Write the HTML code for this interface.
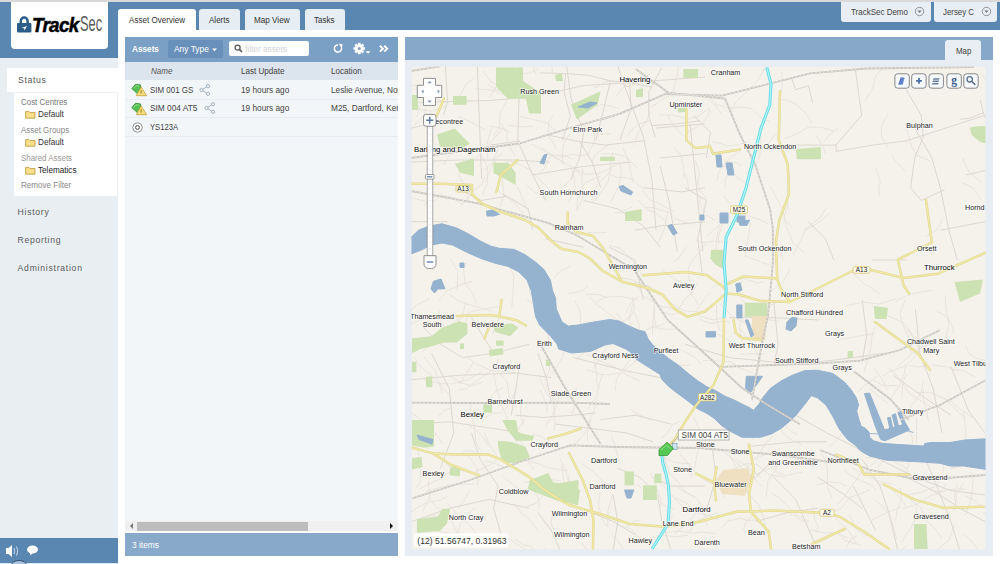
<!DOCTYPE html>
<html><head><meta charset="utf-8">
<style>
*{margin:0;padding:0;box-sizing:border-box}
html,body{width:1000px;height:564px;overflow:hidden;background:#fff;font-family:"Liberation Sans",sans-serif}
.a{position:absolute;white-space:nowrap}
.t{position:absolute;white-space:nowrap;line-height:1}
</style></head><body>
<!-- top strip -->
<div class="a" style="left:0;top:0;width:1000px;height:2px;background:#d9d9d9"></div>
<!-- header blue -->
<div class="a" style="left:0;top:2px;width:1000px;height:28px;background:#5a87b2"></div>
<div class="a" style="left:0;top:30px;width:118px;height:27.5px;background:#5a87b2"></div>
<!-- logo -->
<div class="a" style="left:10.5px;top:2px;width:97.5px;height:46.5px;background:#fff;border-radius:0 0 4px 4px"></div>
<svg class="a" style="left:16px;top:15px" width="17" height="19" viewBox="0 0 17 19">
 <path d="M4.8 9 V6 A3.4 3.4 0 0 1 11.6 6 V9" fill="none" stroke="#2c5d88" stroke-width="2.5"/>
 <rect x="1" y="8" width="14.4" height="9.6" rx="1" fill="#2c5d88"/>
 <path d="M5.5 13 L11 11 L8.5 15.5 L8.2 13.3Z" fill="#fff"/>
</svg>
<div class="t" style="left:32px;top:14px;font-size:21px;font-weight:bold;font-style:italic;color:#000;transform:scaleX(0.9);transform-origin:0 0;letter-spacing:-0.8px;-webkit-text-stroke:0.5px #000">Track</div>
<div class="t" style="left:79.5px;top:13.6px;font-size:21.5px;color:#5a5a5a;transform:scaleX(0.6);transform-origin:0 0">Sec</div>

<!-- right dropdowns -->
<div class="a" style="left:841px;top:2px;width:90px;height:20px;background:#e8eef4;border-radius:0 0 3px 3px"></div>
<div class="t" style="left:850.5px;top:7.99px;font-size:8.6px;color:#444;transform:scaleX(0.929);transform-origin:0 0">TrackSec Demo</div>
<svg class="a" style="left:914px;top:6px" width="11" height="11"><circle cx="5.5" cy="5.5" r="4.2" fill="none" stroke="#8a8a8a" stroke-width="0.9"/><path d="M3.4 4.4 L7.6 4.4 L5.5 6.9Z" fill="#7a7a7a"/></svg>
<div class="a" style="left:934px;top:2px;width:62.5px;height:20px;background:#e8eef4;border-radius:0 0 3px 3px"></div>
<div class="t" style="left:942.6px;top:7.99px;font-size:8.6px;color:#444;transform:scaleX(0.914);transform-origin:0 0">Jersey C</div>
<svg class="a" style="left:981px;top:6px" width="11" height="11"><circle cx="5.5" cy="5.5" r="4.2" fill="none" stroke="#8a8a8a" stroke-width="0.9"/><path d="M3.4 4.4 L7.6 4.4 L5.5 6.9Z" fill="#7a7a7a"/></svg>

<!-- left nav -->
<div class="a" style="left:0;top:57.5px;width:118px;height:480px;background:#e9eef3"></div>
<div class="a" style="left:7px;top:67.5px;width:111px;height:24.5px;background:#fff"></div>
<div class="t" style="left:18px;top:75.8px;font-size:8.7px;letter-spacing:0.65px;color:#555">Status</div>
<div class="a" style="left:14px;top:92px;width:103px;height:104px;background:#fff;border-top:1px solid #eef2f6"></div>
<div class="t" style="left:21.0px;top:98.42px;font-size:8.9px;color:#777;transform:scaleX(0.893);transform-origin:0 0">Cost Centres</div>
<div class="t" style="left:38.4px;top:110.42px;font-size:8.9px;color:#333;transform:scaleX(0.919);transform-origin:0 0">Default</div>
<div class="t" style="left:21.0px;top:126.42px;font-size:8.9px;color:#888;transform:scaleX(0.896);transform-origin:0 0">Asset Groups</div>
<div class="t" style="left:38.4px;top:138.42px;font-size:8.9px;color:#333;transform:scaleX(0.919);transform-origin:0 0">Default</div>
<div class="t" style="left:21.0px;top:154.42px;font-size:8.9px;color:#999;transform:scaleX(0.892);transform-origin:0 0">Shared Assets</div>
<div class="t" style="left:38.4px;top:166.42px;font-size:8.9px;color:#222;transform:scaleX(0.918);transform-origin:0 0">Telematics</div>
<div class="t" style="left:21.0px;top:180.92px;font-size:8.9px;color:#888;transform:scaleX(0.908);transform-origin:0 0">Remove Filter</div>
<svg class="a" style="left:25px;top:110px" width="11" height="9"><path d="M0.6 1.6 h3.4 l1 1 h5 v5.6 h-9.4z" fill="#f8e08a" stroke="#b8973a" stroke-width="0.8" stroke-linejoin="round"/></svg>
<svg class="a" style="left:25px;top:138px" width="11" height="9"><path d="M0.6 1.6 h3.4 l1 1 h5 v5.6 h-9.4z" fill="#f8e08a" stroke="#b8973a" stroke-width="0.8" stroke-linejoin="round"/></svg>
<svg class="a" style="left:25px;top:166px" width="11" height="9"><path d="M0.6 1.6 h3.4 l1 1 h5 v5.6 h-9.4z" fill="#f8e08a" stroke="#b8973a" stroke-width="0.8" stroke-linejoin="round"/></svg>
<div class="t" style="left:17.6px;top:208px;font-size:8.6px;letter-spacing:0.73px;color:#5a5a5a">History</div>
<div class="t" style="left:17.6px;top:236.4px;font-size:8.6px;letter-spacing:0.7px;color:#5a5a5a">Reporting</div>
<div class="t" style="left:17.6px;top:263.6px;font-size:8.6px;letter-spacing:0.76px;color:#5a5a5a">Administration</div>
<!-- left footer -->
<div class="a" style="left:0;top:537.5px;width:118px;height:25px;background:#5a87b2"></div>
<div class="a" style="left:0;top:562.5px;width:118px;height:1.5px;background:#dde6ee"></div>
<svg class="a" style="left:4px;top:544px" width="40" height="14">
 <path d="M2 4 h2.5 l3.5 -3 v12 l-3.5 -3 h-2.5z" fill="#fff"/>
 <path d="M10 4 q1.5 3 0 6 M12.5 2.5 q2.5 4.5 0 9" fill="none" stroke="#cfe0ee" stroke-width="0.9"/>
 <ellipse cx="28.5" cy="5.5" rx="5.5" ry="4" fill="#fff"/>
 <path d="M26 8.5 l0.5 3 l2.5 -3z" fill="#fff"/>
</svg>
<svg class="a" style="left:10px;top:560px" width="18" height="4"><ellipse cx="9" cy="5" rx="7.5" ry="4.5" fill="#a9c3da" stroke="#2e4e6e" stroke-width="1"/></svg>

<!-- tabs -->
<div class="a" style="left:118px;top:9px;width:77.5px;height:22px;background:#fff;border-radius:3px 3px 0 0"></div>
<div class="t" style="left:128.7px;top:16.17px;font-size:8.9px;color:#333;transform:scaleX(0.909);transform-origin:0 0">Asset Overview</div>
<div class="a" style="left:199px;top:9px;width:41px;height:21px;background:#e6edf3;border-radius:3px 3px 0 0"></div>
<div class="t" style="left:209.4px;top:16.22px;font-size:8.9px;color:#333;transform:scaleX(0.906);transform-origin:0 0">Alerts</div>
<div class="a" style="left:244.5px;top:9px;width:55.5px;height:21px;background:#e6edf3;border-radius:3px 3px 0 0"></div>
<div class="t" style="left:254.4px;top:16.22px;font-size:8.9px;color:#333;transform:scaleX(0.915);transform-origin:0 0">Map View</div>
<div class="a" style="left:304.5px;top:9px;width:40.5px;height:21px;background:#e6edf3;border-radius:3px 3px 0 0"></div>
<div class="t" style="left:314.4px;top:16.22px;font-size:8.9px;color:#333;transform:scaleX(0.906);transform-origin:0 0">Tasks</div>

<!-- asset list panel -->
<div class="a" style="left:125px;top:37px;width:273px;height:25px;background:#7ba0c5"></div>
<div class="t" style="left:132.0px;top:45.12px;font-size:8.9px;font-weight:bold;color:#fff;transform:scaleX(0.925);transform-origin:0 0">Assets</div>
<div class="a" style="left:168px;top:40px;width:54.5px;height:17.5px;background:#6890ba;border-radius:2px"></div>
<div class="t" style="left:174.0px;top:45.12px;font-size:8.9px;color:#fff;transform:scaleX(0.947);transform-origin:0 0">Any Type</div>
<svg class="a" style="left:212px;top:47.5px" width="6" height="4"><path d="M0 0.5 h5 l-2.5 2.8z" fill="#fff"/></svg>
<div class="a" style="left:228.5px;top:40.5px;width:80.5px;height:15.5px;background:#fff;border-radius:2px"></div>
<svg class="a" style="left:233.5px;top:44px" width="9" height="9"><circle cx="3.6" cy="3.6" r="2.5" fill="none" stroke="#555" stroke-width="1.3"/><path d="M5.4 5.4 L8 8" stroke="#555" stroke-width="1.6"/></svg>
<div class="t" style="left:244.5px;top:45.12px;font-size:8.9px;color:#d2d2d2;transform:scaleX(0.933);transform-origin:0 0">filter assets</div>
<svg class="a" style="left:332px;top:43px" width="12" height="12"><path d="M6 1.9 A3.6 3.6 0 1 0 9.45 4.5" fill="none" stroke="#fff" stroke-width="1.5"/><path d="M6.6 0.4 L10.6 1.3 L9.6 5.2z" fill="#fff"/></svg>
<svg class="a" style="left:353px;top:42px" width="19" height="13"><g transform="translate(6.3,6.5)" fill="#fff"><circle r="4.3"/><rect x="-1.3" y="-5.7" width="2.6" height="11.4" transform="rotate(0)"/><rect x="-1.3" y="-5.7" width="2.6" height="11.4" transform="rotate(45)"/><rect x="-1.3" y="-5.7" width="2.6" height="11.4" transform="rotate(90)"/><rect x="-1.3" y="-5.7" width="2.6" height="11.4" transform="rotate(135)"/><circle r="1.5" fill="#8d9cb3"/></g><path d="M12.6 9.3 h4.9 l-2.45 2.5z" fill="#fff"/></svg>
<svg class="a" style="left:379px;top:44.5px" width="10" height="8"><path d="M0.9 0.8 L3.9 3.7 L0.9 6.6 M5.2 0.8 L8.2 3.7 L5.2 6.6" fill="none" stroke="#fff" stroke-width="1.9"/></svg>

<div class="a" style="left:125px;top:62px;width:273px;height:18px;background:#dce5ee"></div>
<div class="t" style="left:151.0px;top:66.92px;font-size:8.9px;font-style:italic;color:#555;transform:scaleX(0.906);transform-origin:0 0">Name</div>
<div class="t" style="left:240.7px;top:66.92px;font-size:8.9px;color:#444;transform:scaleX(0.911);transform-origin:0 0">Last Update</div>
<div class="t" style="left:330.7px;top:66.92px;font-size:8.9px;color:#444;transform:scaleX(0.915);transform-origin:0 0">Location</div>

<div class="a" style="left:125px;top:80px;width:273px;height:440.5px;background:#f3f6f9;overflow:hidden">
 <div class="a" style="left:0;top:18.5px;width:273px;height:1px;background:#e6ecf2"></div>
 <div class="a" style="left:0;top:37px;width:273px;height:1px;background:#e6ecf2"></div>
 <div class="a" style="left:0;top:55.5px;width:273px;height:1px;background:#e6ecf2"></div>
 <div class="t" style="left:25.2px;top:5.85px;font-size:9.1px;color:#444;transform:scaleX(0.874);transform-origin:0 0">SIM 001 GS</div>
 <div class="t" style="left:115.7px;top:5.95px;font-size:9.1px;color:#444;transform:scaleX(0.909);transform-origin:0 0">19 hours ago</div>
 <div class="t" style="left:205.7px;top:5.95px;font-size:9.1px;color:#444;transform:scaleX(0.909);transform-origin:0 0">Leslie Avenue, North</div>
 <div class="t" style="left:25.2px;top:23.95px;font-size:9.1px;color:#444;transform:scaleX(0.913);transform-origin:0 0">SIM 004 AT5</div>
 <div class="t" style="left:115.7px;top:23.75px;font-size:9.1px;color:#444;transform:scaleX(0.909);transform-origin:0 0">19 hours ago</div>
 <div class="t" style="left:205.7px;top:23.85px;font-size:9.1px;color:#444;transform:scaleX(0.909);transform-origin:0 0">M25, Dartford, Kent</div>
 <div class="t" style="left:25.2px;top:42.75px;font-size:9.1px;color:#444;transform:scaleX(0.839);transform-origin:0 0">YS123A</div>
</div>
<!-- row icons -->
<svg class="a" style="left:130px;top:83px" width="18" height="15"><path d="M1.8 5.6 L5.5 1.3 L10.5 1.9 L11.1 6.9 L7.4 10.6z" fill="#56c152" stroke="#2f8a2d" stroke-width="0.8"/><path d="M3.5 5.5 L6 2.8 L9 3.2" fill="none" stroke="#a6e5a2" stroke-width="0.8"/><path d="M6.2 12.7 L11.1 4 L16.7 12.7z" fill="#f6de7a" stroke="#c4a23c" stroke-width="0.8" stroke-linejoin="round"/><rect x="10.6" y="7.3" width="1" height="3.2" fill="#9a7a1e"/></svg>
<svg class="a" style="left:130px;top:101.6px" width="18" height="15"><path d="M1.8 5.6 L5.5 1.3 L10.5 1.9 L11.1 6.9 L7.4 10.6z" fill="#56c152" stroke="#2f8a2d" stroke-width="0.8"/><path d="M3.5 5.5 L6 2.8 L9 3.2" fill="none" stroke="#a6e5a2" stroke-width="0.8"/><path d="M6.2 12.7 L11.1 4 L16.7 12.7z" fill="#f6de7a" stroke="#c4a23c" stroke-width="0.8" stroke-linejoin="round"/><rect x="10.6" y="7.3" width="1" height="3.2" fill="#9a7a1e"/></svg>
<svg class="a" style="left:132px;top:121.5px" width="12" height="12"><path d="M5.5 0.7 L9 2 L10.3 5.5 L9 9 L5.5 10.3 L2 9 L0.7 5.5 L2 2z" fill="#fff" stroke="#777" stroke-width="0.8"/><circle cx="5.5" cy="5.5" r="1.9" fill="none" stroke="#444" stroke-width="1"/></svg>
<svg class="a" style="left:199px;top:84px" width="12" height="12"><g fill="none" stroke="#9aa8b5" stroke-width="0.9"><circle cx="2.5" cy="6" r="1.6"/><circle cx="9" cy="2.2" r="1.6"/><circle cx="9" cy="9.8" r="1.6"/><path d="M4 5.2 L7.5 3 M4 6.8 L7.5 9"/></g></svg>
<svg class="a" style="left:203.5px;top:102px" width="12" height="12"><g fill="none" stroke="#9aa8b5" stroke-width="0.9"><circle cx="2.5" cy="6" r="1.6"/><circle cx="9" cy="2.2" r="1.6"/><circle cx="9" cy="9.8" r="1.6"/><path d="M4 5.2 L7.5 3 M4 6.8 L7.5 9"/></g></svg>

<!-- scrollbar -->
<div class="a" style="left:125px;top:520.5px;width:273px;height:10.5px;background:#f0f0f0"></div>
<svg class="a" style="left:129px;top:522px" width="5" height="8"><path d="M4 1 v6 l-3 -3z" fill="#777"/></svg>
<div class="a" style="left:137px;top:522px;width:171px;height:8.5px;background:#bdbdbd"></div>
<svg class="a" style="left:389px;top:522px" width="5" height="8"><path d="M1 1 v6 l3 -3z" fill="#111"/></svg>
<div class="a" style="left:125px;top:533px;width:273px;height:23px;background:#88a9c9"></div>
<div class="t" style="left:132.0px;top:541.02px;font-size:8.9px;color:#fff;transform:scaleX(0.941);transform-origin:0 0">3 items</div>

<!-- map panel -->
<div class="a" style="left:405px;top:37px;width:588px;height:23px;background:#87a8c9"></div>
<div class="a" style="left:945px;top:40px;width:36px;height:20px;background:#e8eef4;border-radius:3px 3px 0 0"></div>
<div class="t" style="left:955.5px;top:46.72px;font-size:8.9px;color:#444;transform:scaleX(0.890);transform-origin:0 0">Map</div>
<div class="a" style="left:405px;top:60px;width:588px;height:496px;background:#e7edf3"></div>
<svg class="a" style="left:0;top:0" width="1000" height="564" viewBox="0 0 1000 564"><defs><clipPath id="mc"><rect x="411.5" y="66.5" width="574" height="483"/></clipPath></defs><g clip-path="url(#mc)">
<rect x="411.5" y="66.5" width="574" height="483" fill="#f5f2ec"/>
<g fill="none" stroke="#d9d5cd" stroke-width="0.9" stroke-linejoin="round"><path d="M980.213,100 L983.404,112.766 L985.532,118.085"/><path d="M960,119.149 L968.511,118.617 L983.404,112.766"/><path d="M540,72.8 L565.6,73.6 L588,75.2 L610.4,80.8 L629.6,82.4 L652,87.2"/><path d="M565.6,73.6 L564,92 L570.4,116 L562.4,140"/><path d="M610.4,80.8 L604,108 L596,140"/><path d="M629.6,82.4 L631.2,108 L620,140"/><path d="M648.8,92 L648.8,116 L655.2,136.8"/><path d="M661.6,68 L648.8,92"/><path d="M652,125.6 L676,124 L700,120.8"/><path d="M445.426,66.383 L447.553,102.553 L443.298,115.319"/><path d="M477.34,66.383 L479.468,123.83 L481.596,179.149"/><path d="M411.383,102.553 L490.106,100.426 L515.638,98.2979 L545.426,94.0426 L583.723,85.5319 L617.766,83.4043 L705,77.0213"/><path d="M519.894,66.383 L517.766,140.851 L532.66,174.894 L545.426,200.426"/><path d="M566.702,66.383 L570.957,98.2979 L583.723,132.34 L579.468,157.872 L570.957,179.149"/><path d="M545.426,134.468 L575.213,140.851 L605,145.106 L643.298,140.851"/><path d="M490.106,145.106 L519.894,140.851"/><path d="M617.766,66.383 L630.532,102.553 L643.298,136.596 L651.809,179.149 L656.064,230.213"/><path d="M411.383,162.128 L456.064,160 L515.638,160 L549.681,162.128"/><path d="M532.66,174.894 L583.723,166.383 L630.532,162.128"/><path d="M656.064,128.085 L705,123.83"/><path d="M660.319,157.872 L705,153.617"/><path d="M579.468,140.851 L592.234,162.128 L600.745,187.66"/><path d="M502.872,194.043 L528.404,208.936 L532.66,230.213"/><path d="M583.723,200.426 L617.766,208.936 L643.298,225.957 L660.319,247.234"/><path d="M643.298,187.66 L681.596,191.915 L705,187.66"/><path d="M660.319,166.383 L668.83,200.426 L677.34,251.489"/><path d="M690.106,123.83 L694.362,166.383 L698.617,208.936 L702.872,251.489"/><path d="M411.383,221.702 L447.553,221.702"/><path d="M545.426,238.723 L583.723,247.234"/><path d="M634.787,230.213 L660.319,225.957 L705,221.702"/><path d="M609.255,247.234 L634.787,260 L643.298,300"/><path d="M411.383,128.085 L430.532,123.83"/><path d="M456.064,187.66 L481.596,200.426 L507.128,196.17"/><path d="M855.213,68.5106 L861.596,115.319 L836.064,145.106 L836.064,151.489"/><path d="M836.064,151.489 L872.234,145.106 L906.277,140.851 L985,115.319"/><path d="M906.277,89.7872 L921.17,115.319 L923.298,136.596 L914.787,157.872 L910.532,187.66 L921.17,200.426 L944.574,189.787"/><path d="M914.787,128.085 L931.809,157.872 L940.319,187.66 L948.83,230.213 L957.34,260"/><path d="M787.128,145.106 L836.064,145.106"/><path d="M685,187.66 L706.277,200.426 L697.766,238.723 L702.021,272.766"/><path d="M940.319,230.213 L985,221.702"/><path d="M872.234,260 L906.277,260"/><path d="M965.851,174.894 L985,170.638"/><path d="M693.511,115.319 L710.532,132.34 L706.277,157.872"/><path d="M791.383,77.0213 L795.638,89.7872 L808.404,85.5319 L812.66,102.553"/><path d="M808.404,221.702 L825.426,238.723 L833.936,260"/><path d="M431.587,353.175 L449.312,388.625 L453.744,432.937 L440.45,468.387"/><path d="M411.647,379.762 L458.175,375.331 L515.781,373.116 L551.231,377.547"/><path d="M462.606,357.606 L493.625,353.175 L529.075,344.312"/><path d="M411.647,424.075 L449.312,421.859 L493.625,428.506 L520.212,432.937"/><path d="M515.781,415.212 L542.369,417.428 L573.387,415.212 L595.544,412.997"/><path d="M471.469,432.937 L480.331,459.525 L498.056,486.112 L493.625,508.269 L502.487,539.287"/><path d="M520.212,362.037 L515.781,388.625 L511.35,415.212"/><path d="M555.662,424.075 L591.112,428.506 L626.562,432.937 L653.15,441.8"/><path d="M599.975,419.644 L635.425,415.212 L670.875,424.075"/><path d="M411.647,521.562 L449.312,508.269 L489.194,499.406 L529.075,508.269"/><path d="M537.937,512.7 L551.231,530.425 L560.094,549.922"/><path d="M591.112,512.7 L613.269,521.562 L635.425,534.856"/><path d="M617.7,468.387 L639.856,477.25 L653.15,490.544"/><path d="M653.15,477.25 L670.875,486.112 L704.996,486.112"/><path d="M471.469,317.725 L493.625,353.175"/><path d="M573.387,357.606 L626.562,370.9 L670.875,379.762 L704.996,393.056"/><path d="M422.725,326.587 L440.45,344.312 L462.606,357.606"/><path d="M537.937,353.175 L546.8,379.762 L551.231,401.919"/><path d="M613.269,494.975 L617.7,521.562 L613.269,549.922"/><path d="M657.581,494.975 L662.012,521.562 L670.875,549.922"/><path d="M685,344.312 L729.312,357.606 L773.625,362.037 L817.937,362.037 L853.387,357.606 L884.406,353.175"/><path d="M729.312,317.725 L773.625,317.725 L817.937,319.941"/><path d="M773.625,300 L778.056,344.312 L773.625,366.469"/><path d="M862.25,300 L866.681,335.45 L862.25,362.037"/><path d="M915.425,308.862 L919.856,353.175 L933.15,388.625 L942.012,432.937"/><path d="M950.875,366.469 L968.6,410.781 L984.996,432.937"/><path d="M893.269,375.331 L924.287,397.487 L950.875,415.212"/><path d="M795.781,415.212 L826.8,432.937 L853.387,446.231 L879.975,459.525 L915.425,477.25 L950.875,490.544 L984.996,494.975"/><path d="M751.469,446.231 L795.781,441.8 L826.8,441.8"/><path d="M862.25,459.525 L879.975,486.112 L888.837,512.7 L897.7,549.922"/><path d="M817.937,477.25 L844.525,494.975 L862.25,508.269"/><path d="M906.562,477.25 L933.15,490.544 L959.737,508.269 L984.996,521.562"/><path d="M919.856,446.231 L933.15,477.25 L950.875,521.562 L959.737,549.922"/><path d="M755.9,521.562 L786.919,512.7 L817.937,508.269"/><path d="M950.875,468.387 L984.996,459.525"/><path d="M773.625,477.25 L795.781,499.406 L809.075,530.425 L817.937,549.922"/><path d="M729.312,486.112 L755.9,477.25 L773.625,459.525"/><path d="M711.587,441.8 L716.019,477.25 L707.156,508.269"/><path d="M853.387,486.112 L875.544,530.425"/></g>
<g fill="none" stroke="#e2ded6" stroke-width="0.7" stroke-linejoin="round"><path d="M504.588,88.4765 L490.4,81.4 L482.9,70.8"/><path d="M473.048,78.8061 L467.2,82.8 L459.4,96.7"/><path d="M475.516,159.488 L483.9,149.5 L489.9,143.3 L494.7,137.4 L503.3,128.3"/><path d="M572.914,167.618 L584.9,174.1 L597.5,173.7 L603.7,171.2 L616.4,164.8"/><path d="M501.789,153.249 L494.8,158.9 L488.9,173.1 L485.3,182"/><path d="M510.264,132.876 L504.1,128.8 L489.2,126.2"/><path d="M552.31,71.8419 L551.5,59 L553.2,49.4 L556.6,36.7 L563.8,27.7"/><path d="M684.013,136.641 L673.8,126 L667,115"/><path d="M539.79,172.778 L544.4,168.5 L547.1,161 L551.3,155.7"/><path d="M448.379,102.895 L443.3,107.6 L431.2,111.2 L415.5,108.8"/><path d="M491.464,127.879 L486.9,144.8 L487.4,152.9 L488,161.6"/><path d="M581.257,105.149 L593.5,107.1 L602.9,104.3 L618.7,108.3"/><path d="M600.285,176.228 L585.9,182.3 L579.1,190.6 L576.8,204 L578,210.7"/><path d="M457.906,116.668 L469.8,121.3 L485,129.8"/><path d="M431.321,96.9849 L426.1,104.4 L424.5,114.6 L413.5,126.5 L405.8,135.1"/><path d="M435.821,81.226 L427.3,89.3 L421.9,100.2 L416.9,116.9"/><path d="M610.43,202.208 L618.7,186.5 L621.6,172.5 L619.5,162.3"/><path d="M634.09,145.356 L638.4,132.4 L647.4,119.9 L650,112"/><path d="M526.798,185.696 L534.7,192.2 L540.5,194.9 L547.7,200.4"/><path d="M687.433,132.637 L702.2,123.4 L707.7,116.7 L710.4,108.8"/><path d="M591.355,200.146 L597.6,184.4 L607.3,174.7 L611.8,168.8"/><path d="M616.621,95.6986 L626.3,83.6 L641,78.5 L650.7,73.8"/><path d="M684.624,173.995 L687.1,179.8 L689.4,191.2"/><path d="M587.745,154.785 L579.9,155.6 L573.9,154 L559.5,157.2"/><path d="M627.604,86.7484 L642.1,80.1 L649.1,74.4"/><path d="M480.516,153.379 L487.7,167.7 L487.6,182.5 L482.3,195.5"/><path d="M560.344,189.244 L569.5,180.9 L573.8,176.4"/><path d="M463.918,66.5859 L467.3,59.7 L466.7,52.2"/><path d="M608.194,145.078 L594.9,155 L591.8,162.7"/><path d="M439.248,133.374 L450,136.8 L461.5,140.7"/><path d="M611.199,133.4 L599.2,134.5 L587.7,130.2 L576.5,117.2"/><path d="M669.006,96.1857 L662.1,99.1 L656.9,103.6 L650.9,106.9"/><path d="M637.558,199.657 L647,209.6 L655.4,212.9 L664.5,220.1 L667.6,226.6"/><path d="M458.048,165.507 L459.7,176.6 L464.6,185.3 L467,194.9 L468.1,201"/><path d="M538.292,68.6942 L529.9,73.3 L522.6,73.3 L514.7,69.6 L507.8,68.3"/><path d="M672.805,93.0512 L676.8,77.3 L679.1,60.2 L681,47.9"/><path d="M553.943,114.73 L548.9,121.2 L548.2,130.4 L549.7,137.3 L556.6,148.7"/><path d="M487.426,84.13 L496.7,90.1 L510.1,90.4 L522.5,98 L539.6,102.5"/><path d="M463.351,204.905 L450.5,196.9 L438.7,194.9 L429.4,198.9 L424.4,206.5"/><path d="M622.86,148.106 L626.7,156.2 L630.3,169.6 L633.2,183.2"/><path d="M667.842,210.577 L664.8,228.1 L658.2,242.7"/><path d="M594.797,126.3 L594.3,142.3 L588,154.3"/><path d="M535.484,74.2548 L530.2,58.7 L524.6,51.1 L518.6,43.8"/><path d="M456.527,132.428 L454.1,149.9 L448.3,156.8 L443.4,165.2"/><path d="M411.309,122.862 L398.9,129 L390,141.5 L387,157 L386.2,170.1"/><path d="M497.598,159.821 L513.7,161.7 L528.7,169.1 L538.1,178.3 L548.7,188.5"/><path d="M493.127,158.187 L501.3,172.8 L503.2,187.5 L504,195.1 L500.5,206.6"/><path d="M643.552,189.135 L633.3,179.4 L624.7,177.6 L617.1,177.4 L610.5,174.4"/><path d="M572.414,159.537 L564.6,155.2 L553.1,155.2 L537.8,147.4 L531.6,144"/><path d="M626.515,136.605 L632.1,129.7 L638.7,124 L649.7,120.7"/><path d="M433.178,201.66 L427.9,214 L428,220.9"/><path d="M484.389,176.739 L482,184 L472.8,191.4 L469.1,197.6 L460.5,205.8"/><path d="M493.522,135.419 L498.8,128.9 L500.6,111.8 L506,101.6 L513.2,85.5"/><path d="M488.642,97.2657 L493.3,92.2 L499.8,78.7"/><path d="M514.911,155.901 L506.9,141.3 L506.7,132.5 L500.1,122.7"/><path d="M412.038,139.263 L398.5,145.1 L391.7,153.1 L387,161.9"/><path d="M508.761,125.341 L523.2,126.9 L532.7,126.4"/><path d="M524.548,214.82 L513.5,201.8 L500.1,192.6 L495.5,187.8"/><path d="M594.504,88.1882 L604.8,81.8 L615.3,81.7 L630.8,87.7"/><path d="M593.329,202.1 L598.7,195.6 L608.3,181.3 L610.3,168.1 L612.6,151.8"/><path d="M674.541,147.966 L681.4,155.4 L683.9,170.1 L683.7,179.2"/><path d="M497.942,149.041 L492.6,161.7 L484.3,170.3"/><path d="M570.062,133.495 L564,142.8 L562.3,151.6 L562.7,164.3"/><path d="M517.44,186.594 L523.4,200.4 L527.4,210.6"/><path d="M519.914,116.392 L532.5,119.2 L546.3,122.9 L558.3,132.5"/><path d="M437.761,199.622 L426.6,201.7 L411,197.4 L405,199.2 L390.7,196.6"/><path d="M547.775,153.489 L562.7,161.9 L573.7,167.6 L581.5,175.9"/><path d="M475.678,88.6582 L492.9,90.2 L505.5,95.7"/><path d="M543.167,148.174 L549.6,154.2 L561.5,161"/><path d="M447.982,103.517 L433.9,98 L428,90.4 L421.2,85.6 L405.7,85.2"/><path d="M544.832,548.061 L536.6,559.1 L532.9,570.2 L526,575.9"/><path d="M586.459,369.616 L602.3,374.7 L609.2,374.6 L620.2,372.8"/><path d="M533.743,470.218 L526.2,458.2 L522,443.2 L514.9,433.5"/><path d="M652.495,370.734 L654.3,359.3 L649.2,343.4"/><path d="M566.276,448.015 L576.2,443.2 L587.3,429.8 L591,419.8"/><path d="M653.556,326.755 L661.5,328.9 L676,329.5"/><path d="M439.188,310.555 L439.2,318.8 L447.3,331.4"/><path d="M576.443,388.062 L573,398.8 L574.3,405.6 L571.4,416.3"/><path d="M550.721,486.53 L540.1,498.3 L535.8,503.3 L526,507"/><path d="M459.064,384.34 L467,373.3 L473.5,361.5"/><path d="M504.516,410.189 L509.9,402.9 L517,387.7"/><path d="M478.806,538.042 L470.3,525.8 L457.4,514.5 L447.6,503.6"/><path d="M611.609,535.14 L617.3,539.7 L623.6,549.4"/><path d="M607.66,526.608 L608.1,509.5 L612.9,494.6"/><path d="M615.866,490.158 L602.6,480.6 L591.3,470.2 L581.3,463.2"/><path d="M450.824,395.609 L441.4,387.2 L434.8,370.7 L423.8,356.6"/><path d="M431.937,314.973 L415.7,321.9 L408.8,325.2 L396.8,336.8 L385.5,342"/><path d="M600.132,491.955 L598.6,504.7 L602,519.1 L606.7,526.8"/><path d="M449.177,518.999 L442.5,517.7 L433.8,515.7 L420.4,519.2"/><path d="M526.515,299.589 L540.4,307.7 L546.7,309.4"/><path d="M440.685,339.099 L447.2,333.9 L453,323.2 L462.8,314.3 L466.2,300.8"/><path d="M569.727,473.814 L567.7,484 L568.5,492.4"/><path d="M560.256,458.775 L566.4,473.3 L569.1,483.5"/><path d="M430.406,298.15 L424.5,301.4 L414.8,306.1 L406.7,317.1"/><path d="M451.759,470.11 L440.7,478.8 L434.6,481.2 L419.8,488.7"/><path d="M415.535,488.566 L420.3,481.7 L420.3,473.2 L419,456.5 L415.9,440.9"/><path d="M630.827,409.375 L636.3,413.1 L650.3,420.1"/><path d="M553.643,530.152 L551.1,522.8 L553.1,510.8"/><path d="M438.089,417.042 L444.6,410 L450.8,407.9"/><path d="M489.317,447.38 L480.2,433.2 L467.1,424.3"/><path d="M606.671,347.517 L597.8,360.8 L593.9,368.5"/><path d="M539.955,389.346 L547.1,405.5 L546.8,413.8"/><path d="M620.779,464.114 L617.9,457.3 L614.9,445 L611.6,435.9"/><path d="M556.074,400.267 L546.2,393.3 L544,387.7 L539.1,377.2"/><path d="M565.025,502.113 L565.3,491.3 L563.9,481.1 L561.8,465.6"/><path d="M574.617,300.529 L579.2,309.2 L580.5,316 L580.5,332.7 L588.8,345.7"/><path d="M427.529,449.058 L429.3,440.9 L437.6,432.3"/><path d="M639.094,332.764 L639.5,326 L634.4,311.8"/><path d="M634.238,361.223 L641.7,356.1 L652.1,350.6"/><path d="M564.351,351.486 L561.5,359.1 L552,373.6"/><path d="M633.958,333.704 L629.1,319.3 L633,303.4"/><path d="M523.807,425.056 L520.8,416.6 L519.9,400.3"/><path d="M503.495,387.317 L494.5,392.3 L487.4,401.1"/><path d="M596.155,302.507 L604.3,297.2 L620.7,296.3 L637.1,299.9"/><path d="M597.033,347.404 L594,358.2 L596.8,374.7 L596.7,383.4 L600.2,388.6"/><path d="M499.386,317.548 L494.8,327.5 L492.7,334.8"/><path d="M617.289,331.083 L631.8,331.5 L638,328.9"/><path d="M576.703,359.868 L581.4,355.1 L594.3,344.5"/><path d="M555.04,445.887 L547.6,440.9 L542.3,437 L532,433.6"/><path d="M425.536,491.728 L438.9,487.8 L449.4,485 L463.1,483.8 L474.1,484.3"/><path d="M537.635,306.516 L530,293.2 L529.3,287.1 L527.1,272.3 L524,257.8"/><path d="M467.261,317.268 L464.6,324.3 L451.4,335"/><path d="M476.561,303.606 L472.5,293.1 L465,283.4 L463.7,269.7 L466.8,261.7"/><path d="M414.792,357.435 L418.8,364.9 L431.7,375.9 L439,383.7 L442.3,393.7"/><path d="M640.498,544.25 L650.2,537.8 L664.4,535.5 L675.5,536.8 L688.3,535.2"/><path d="M463.78,451.259 L471.5,450.6 L478.1,453.7"/><path d="M496.871,326.737 L504.1,329.4 L510.5,328.3"/><path d="M422.626,511.833 L429.6,497.6 L428.5,481"/><path d="M627.08,526.832 L633.9,521 L640.2,520"/><path d="M637.867,485.223 L649.6,492 L654.5,497.8 L665.7,505.9 L675.1,509.2"/><path d="M498.374,530.895 L512.1,540.8 L523,548.3 L528.9,555.6"/><path d="M607.475,298.093 L598,294.5 L585.5,294.2"/><path d="M625.698,313.54 L630.8,303.5 L637.3,296.7"/><path d="M424.437,380.081 L439.6,383.5 L451.5,384 L467,380.1 L482.2,371.6"/><path d="M464.464,471.165 L448,465.9 L440.6,456.6"/><path d="M550.752,317.08 L547,327.2 L549.3,343.7"/><path d="M632.224,296.52 L634.7,307.4 L631.9,314.9 L621.3,323.5"/><path d="M442.593,443.869 L435.2,432.2 L427,426.7 L415.7,415.3 L401.9,409.6"/><path d="M520.261,490.32 L512.4,484.1 L501.2,475.1"/><path d="M477.603,485.476 L478.1,477.6 L476.9,468.8 L470.5,458.3 L462.6,452.3"/><path d="M653.812,478.742 L660.1,482.2 L671.8,495.6 L682.4,506 L687.3,512.8"/><path d="M437.611,343.469 L431.7,345.1 L422.5,351.6"/><path d="M655.239,366.719 L668.5,367 L681.4,374.4 L690.6,380.7"/><path d="M597.526,399.079 L593.2,412.2 L587.6,424.7 L587.3,433.5 L587.6,440.9"/><path d="M475.692,471.468 L489.8,465.4 L500.2,456.6"/><path d="M516.471,407.895 L509.4,397.9 L507.1,381.6 L500.5,374.2"/><path d="M618.136,525.222 L630.2,528.5 L641.1,539.4 L652.7,543.1"/><path d="M554.066,430.128 L555,424 L554.5,413.6 L553.1,398.7 L544.9,382.8"/><path d="M538.934,531.567 L532.6,523.5 L526.1,516.9 L521.3,513 L514.7,504.1"/><path d="M498.679,358.676 L494.6,368.7 L480,378.6 L465.9,389 L458,390"/><path d="M428.155,496.784 L436.2,506.6 L449.6,518.1 L455.9,530.2 L463.7,543.9"/><path d="M484.291,432.001 L487.9,441.6 L492.5,449.6 L497.6,457.1"/><path d="M457.287,290.698 L457.4,280.4 L457.3,270.6 L450.7,258.8"/><path d="M634.356,329.563 L629.9,334.6 L615.1,342.7 L607.5,343.5"/><path d="M568.657,293.881 L582.2,290.7 L587.9,286.3"/><path d="M469.177,491.063 L465.2,498.6 L458,508.7"/><path d="M582.318,543.088 L591,555.9 L594,563.7 L594.9,576 L590.7,586.5"/><path d="M549.211,358.504 L549.6,370.2 L544.4,380.8"/><path d="M585.405,353.861 L600.2,360.9 L615,367.2 L625.5,374.4 L640,381.4"/><path d="M515.285,538.799 L523.5,545 L529.7,545.7 L541,555.3 L556.4,558.7"/><path d="M531.559,486.107 L538.7,498.8 L539.5,508.9"/><path d="M502.173,412.904 L492.8,413.2 L485.2,418"/><path d="M482.998,381.991 L471.5,385.7 L459.9,382.6 L448.5,374.7"/><path d="M493.393,372.127 L496.7,389.5 L502.1,406.6 L507.2,418.2 L513.9,429.2"/><path d="M438.017,302.017 L446,291.4 L460,284.8 L472.7,280.9"/><path d="M567.077,470.369 L560.1,470 L546.8,467.3 L539.3,464.1 L523.6,459.2"/><path d="M436.051,531.003 L451.3,533.4 L460.4,532.7"/><path d="M516.024,372.486 L503.1,371.7 L491.2,370.6 L476.6,364.2 L467.8,357.5"/><path d="M511.757,307.41 L512.9,294.4 L513.9,276.6 L509.4,266.6 L499.8,256.7"/><path d="M448.789,294.022 L460.3,302.1 L475.9,306.5 L483.2,308.3 L492,311.3"/><path d="M523.243,482.75 L538.1,479.3 L554.4,480 L561.3,481.4"/><path d="M587.6,409.29 L597.3,395.4 L597.8,389 L602.8,373.2"/><path d="M564.938,390.738 L559.1,396.2 L555.6,407.5 L551.7,417.1 L545.3,426.4"/><path d="M447.082,496.516 L440.1,500.3 L428.5,502.2 L418.1,507.1 L406,516"/><path d="M480.697,451.058 L476,442.3 L474.2,424.6 L470,412.1 L471.5,401.1"/><path d="M504.793,467.369 L490.2,461.6 L484.2,461"/><path d="M516.203,441.941 L516,432.5 L525.1,418.5"/><path d="M447.603,542.621 L457.7,532.7 L460.7,522.9 L468.4,512.9 L475.2,508"/><path d="M642.999,350.614 L636.5,342.1 L627.6,327.4 L623.8,322.7 L616.3,312.7"/><path d="M499.421,306.221 L482.9,309.2 L470.9,311.7 L460,318.8 L455.2,325.7"/><path d="M752.17,310.84 L741.8,299.5 L739.8,290.8 L742.3,279.1"/><path d="M699.467,319.392 L711.9,323.6 L723.8,320.6 L729.8,322.8"/><path d="M778.573,321.337 L761.7,318.6 L754.5,318 L741.8,315.1"/><path d="M660.945,351.718 L661,362.3 L662.1,368.6"/><path d="M752.891,321.381 L764.3,309.6 L778.8,300.6"/><path d="M654.393,307.09 L652.7,324.5 L652.3,335.2"/><path d="M665.557,362.09 L672.7,365.8 L690,364.9"/><path d="M728.454,282.362 L743.4,278.4 L756.4,282.8 L763.1,282.2"/><path d="M760.792,359.847 L754.2,348.6 L746.8,336.9 L740.1,328.9"/><path d="M699.997,312.27 L683.1,310.5 L673.5,304"/><path d="M767.816,293.341 L781.9,283.5 L790.3,269.1"/><path d="M711.559,288.244 L723.4,281.7 L733.4,280.5"/><path d="M716.406,333.396 L729.3,340.7 L735.7,350.2"/><path d="M710.235,292.698 L704.7,298.3 L695.8,311.7"/><path d="M666.848,321.736 L660.6,325.7 L654,326.3 L641.3,332.3"/><path d="M716.393,304.33 L717,322 L720.1,330.6"/><path d="M678.104,313.162 L671.6,314.9 L662.6,311.9"/><path d="M642.565,348.597 L633.6,355.5 L622.9,369.1"/><path d="M697.616,283.447 L690.7,294.3 L684.4,299.5 L677.1,312"/><path d="M652.683,287.431 L638.2,283.1 L631.5,279.4 L618,277.7"/><path d="M689.287,280.853 L688.2,270 L690,263.6 L696.4,255.8 L706.7,243.1"/><path d="M642.471,357.368 L634.5,362 L622.1,372.1 L616.8,378 L615,391"/><path d="M723.172,317.89 L713.1,320 L697.8,315.5"/><path d="M764.66,353.788 L755.2,353.7 L740.4,354.5"/><path d="M644.103,348.383 L659.4,357 L667.6,357.3"/><path d="M680.073,349.458 L695.3,357.3 L701.1,364.3"/><path d="M741.894,319.435 L739.3,326.2 L741.8,340.6 L743.2,347.9"/><path d="M720.121,303.768 L731.5,315.9 L739.2,320 L751.9,326"/><path d="M703.458,360.597 L714.1,360.8 L730.2,361.6 L739.2,367.5 L753.3,373.3"/><path d="M678.46,308.482 L662.9,307.1 L649.1,299.4 L643.3,296 L634.6,280.9"/><path d="M846.118,486.013 L839.6,482.8 L829.7,481.8 L816.1,485"/><path d="M877.835,483.279 L890.6,488 L902,500.1 L905.5,505.5"/><path d="M849.168,513.95 L855.4,528.3 L860.9,533 L866.6,535.4 L873,534.9"/><path d="M864.297,458.201 L881,456.2 L893.1,461.3 L903.4,465.8 L913.6,478.9"/><path d="M906.809,469.878 L910.8,458 L916,445.7 L916.6,431.9 L916.6,417.4"/><path d="M901.386,506.795 L895.5,509.2 L887.7,512 L871.9,519.9"/><path d="M970.976,457.69 L983,453.8 L992.1,456.3 L1000,461.7"/><path d="M829.335,447.281 L839.1,437.4 L848.3,424.3 L857.2,412.1"/><path d="M983.022,513.865 L991.4,508.3 L1004,502.1 L1020.2,501"/><path d="M895.787,520.526 L896.8,511.4 L901.6,498.6 L900.3,487.8"/><path d="M875.927,499.944 L887.8,512.8 L892.2,522.9 L896.7,538.8"/><path d="M870.219,489.299 L861,493.7 L849.3,497.6 L840.9,508.6 L826.8,513.4"/><path d="M870.425,472.702 L859.2,471.8 L851.4,467.8"/><path d="M861.065,545.616 L844.5,540 L836.9,531.9"/><path d="M801.978,445.171 L793.3,441 L785.3,435.5 L779.1,426.1"/><path d="M934.516,486.876 L922.4,492 L905.4,495.3"/><path d="M897.171,450.787 L883.9,454.5 L877.7,459.3 L869.7,466.9"/><path d="M941.956,538.008 L934.5,528.1 L928.4,522.9 L920.4,507 L910.6,499.8"/><path d="M965.485,515.198 L971.2,499.5 L971.9,491.7 L973.2,479.6 L970.9,471.7"/><path d="M916.568,505.741 L915.2,519.3 L910.5,529.2 L904.5,536.8 L901.9,542.2"/><path d="M955.799,503.896 L954.3,495.9 L957.5,483.5"/><path d="M965.679,496.063 L975.5,500.8 L981.2,506.2"/><path d="M819.73,450.911 L825.8,461.1 L827.8,472.1 L827.2,485.9 L832,497.9"/><path d="M844.079,470.024 L849.6,474.6 L861,480.9 L871.6,485.1 L876,490.1"/><path d="M907.792,544.598 L901.1,550.4 L894.6,554.9 L891.7,562.4 L886.5,578"/><path d="M877.4,467.464 L883.3,460.8 L888.9,447.3"/><path d="M857.194,535.409 L851,538.8 L846.1,548.1"/><path d="M963.226,483.167 L956.5,493.6 L956,504.4 L952.8,511.2"/><path d="M864.981,466.698 L869.4,475.8 L877.3,480.8 L892.5,484.5"/><path d="M824.025,461.396 L811.7,458.4 L796.2,459.4"/><path d="M868.065,463.596 L857.8,477.8 L847.6,491.9 L842.8,499.2 L837.3,504.3"/><path d="M848.241,538.058 L837,532.8 L824.9,533 L810.1,530"/><path d="M816.922,532.852 L818,526.6 L814.9,519.5 L812.4,505.2"/><path d="M943.586,465.241 L942.8,472 L936.5,486.3"/><path d="M835.673,518.34 L840.8,523.8 L848,529.8 L856.8,544.3"/><path d="M963.31,533.88 L969.7,538.9 L979.4,551.1 L995.2,556.6"/><path d="M930.2,490.421 L940.3,492 L948.1,489.5 L965,489.1"/><path d="M931.829,444.409 L941.3,450.3 L946.5,456.2"/><path d="M902.184,508.611 L917.6,504.1 L929.9,496.2 L940.4,492.2 L946.3,483.9"/><path d="M954.341,524.636 L949,540.2 L937.7,549.2"/><path d="M945.134,295.013 L946.1,310 L948.9,324 L945.9,338.7"/><path d="M895.146,302.141 L904.9,296.4 L916.4,292.8 L932.3,290.4"/><path d="M923.582,381.339 L920.7,393.1 L916.8,399.6 L912.1,404.1 L904.5,417.8"/><path d="M928.3,420.871 L926.9,411.9 L924.3,404.3 L923.1,397.3 L923.5,389.6"/><path d="M920.805,355.175 L916.7,343.7 L908.1,328.8"/><path d="M897.422,409.433 L901.9,417.1 L906.1,423.2 L912.9,439.1 L911.6,446.8"/><path d="M964.936,344.823 L969,353.4 L976,358.2 L985.1,360.4 L999.3,362.9"/><path d="M874.124,333.804 L864.7,335 L858.3,336.1 L840.8,339.3"/><path d="M953.411,334.783 L952.8,327.5 L947.9,317.4 L937.1,311.1"/><path d="M974.945,377.008 L962.8,370.3 L953.9,369.7 L948.1,367.2 L932.2,364.7"/><path d="M883.217,376.144 L889.7,371.4 L904.8,366.2 L912.3,359.6 L921.8,346.9"/><path d="M906.066,364.403 L904.3,373.1 L899.9,385.1 L891,398.2"/><path d="M973.149,417.566 L960.6,409.7 L950.6,401.1 L943.5,398.2"/><path d="M877.288,375.962 L864.3,385.7 L858.3,391.9"/><path d="M864.003,372.45 L866.9,361.7 L870.8,348.3 L871.8,337.3 L875,326.5"/><path d="M963.259,412.04 L964.3,418 L965.6,432 L966.1,443.7"/><path d="M924.597,347.831 L913,336.2 L902.6,322.2 L888.1,316 L875.9,308.8"/><path d="M897.13,367.102 L907.5,357.8 L920,347.3 L933.1,343.6"/><path d="M887.81,389.862 L880.9,377.8 L873.3,367.3"/><path d="M926.247,366.25 L917.6,367 L909.3,365.3"/><path d="M887.657,403.038 L877.8,395.6 L868.7,387.9"/><path d="M888.319,367.315 L900.2,379.3 L908.9,393 L922.1,401.4 L932.2,408"/><path d="M964.819,417.992 L955.9,409.7 L946,399.5 L930,392.1 L918.3,392.8"/><path d="M906.671,373.536 L902.7,383.2 L902.1,396.3"/><path d="M897.491,385.503 L884,385.8 L872.7,379.8"/><path d="M778.37,101.953 L782.3,86.8 L782.1,80.7 L781.9,71.8"/><path d="M747.224,142.389 L737.3,144.8 L727.4,146 L721.5,143.7 L712.7,141.9"/><path d="M762.454,70.5546 L768.3,66.1 L775.4,64.1 L783.4,62.3"/><path d="M726.103,213.053 L719.6,224.4 L706.3,236.4"/><path d="M724.184,161.035 L735.9,162.6 L741.4,165.9"/><path d="M706.714,198.77 L699.9,190.5 L697.7,182.9 L699.6,172.4 L695.1,159.8"/><path d="M729.635,112.291 L736.8,100.8 L748.5,90.2 L755.6,83.2 L764.9,68.7"/><path d="M730.195,169.456 L725.3,179.9 L725.2,186.4"/><path d="M760.388,124.351 L760.8,142.2 L759.9,155.1 L757.5,162.4 L745.3,174.2"/><path d="M708.573,108.638 L697.6,116.6 L688.5,119.2 L672.6,115 L658.4,114.8"/><path d="M768.7,224.26 L760.9,219.9 L747,215.6 L734.3,208.5 L723.4,196"/><path d="M745.336,257.359 L745.5,249.6 L749.2,233.3 L750.3,222.5"/><path d="M769.511,264.909 L760.4,261.9 L746.7,256.5"/><path d="M784.369,138.86 L800.2,132.3 L808.3,127.1 L819.9,127.1 L833.7,130.8"/><path d="M782.976,245.458 L781.6,254.7 L783.2,260.7"/><path d="M724.125,216.741 L721.1,227.7 L718.5,236.7 L718.8,243.9"/><path d="M705.112,93.6091 L716.5,104.4 L726.1,107.6"/><path d="M716.936,180.905 L719.1,171.3 L725.2,163.5 L729,158.4 L740.2,151.3"/><path d="M715.705,250.747 L716.9,237.3 L719.4,225.6"/><path d="M723.132,165.163 L733.1,173.1 L737.8,177.9 L749.9,186.2"/><path d="M708.41,99.425 L716.1,106.3 L722,114.5"/><path d="M777.93,98.8297 L787.8,100.5 L796,104.3 L807,114.7 L811.6,123.3"/><path d="M787.965,162.976 L789.1,175.3 L789.3,184.3 L786.9,191.1 L788.2,208.8"/><path d="M756.602,151.781 L767.9,144.3 L775.3,134.2"/><path d="M769.963,121.45 L762.5,119.3 L752,108.8 L744.2,107.1 L728.9,108.4"/><path d="M981.555,182.751 L968.9,171.6 L964.8,164.1 L962.9,158.1"/><path d="M793.01,254.78 L800.9,240.4 L805.7,228.6 L819.4,218.4 L826.9,207.2"/><path d="M839.126,127.383 L830.8,133.4 L823.8,142"/><path d="M961.487,182.673 L972.3,187.3 L981.2,199.7"/><path d="M816.622,136.22 L822.8,146.3 L825.3,153.8"/><path d="M906.53,172.013 L895,160.6 L892.1,154.7"/><path d="M875.62,167.745 L880.2,181.2 L878.9,188.9 L879.4,196.5"/><path d="M888.013,148.292 L881.4,135.7 L881.6,125.7 L888.3,112.7"/><path d="M981.032,73.7021 L989.7,85.1 L999.7,91.8 L1010.7,93.2 L1015.5,97.3"/><path d="M851.716,271.586 L864.2,284.1 L869.6,286.7 L879.8,294"/><path d="M896.377,298.453 L879.8,303.9 L862.2,302.1 L845,306.1"/><path d="M804.116,230.638 L810.3,227.7 L820.5,221.2 L830,212.8"/><path d="M792.065,227.026 L785.3,220.6 L782.9,209.9 L775.7,196.8 L770.9,186.8"/><path d="M864.68,101.389 L872.8,88 L876,74.8 L884.7,66.6"/><path d="M925.265,236.819 L937.2,229.5 L943.1,217.4"/><path d="M929.7,160.962 L917.2,155.3 L911.8,147.1 L910.1,141.3 L905.8,125.7"/><path d="M905.497,298.771 L900.2,313.4 L902.1,323.5 L909.9,339.3 L910.8,353.2"/><path d="M804.039,252.572 L792.9,242.3 L786.7,227.4 L783.8,217.6 L787.8,205.4"/><path d="M570.536,266.016 L559.6,271.7 L553.9,278.5"/><path d="M691.502,224.442 L676,219 L668.1,212 L653,207.6 L645.1,207.7"/><path d="M576.448,209.931 L581.3,201.6 L583.9,192.7 L581.7,181.5 L582.9,168"/><path d="M587.922,232.427 L598.3,233.1 L607.1,232.2"/><path d="M614.415,213.359 L620.3,212.3 L632.3,207.1"/><path d="M647.146,288.369 L654.2,302.7 L654.5,316.4 L655.5,324.7"/><path d="M686.77,246.501 L678.3,258.4 L673.2,262.4"/><path d="M715.165,220.335 L706.4,215.1 L699.9,203.9 L700.3,195.6"/><path d="M673.903,212.13 L659.9,203.8 L649.5,199.3 L642.9,190.5"/><path d="M662.879,270.829 L672.2,277.7 L686.1,285.8 L692.4,295.6 L698.6,305"/><path d="M641.887,275.454 L638.2,267.9 L627.2,254.8 L619.9,248.1 L608.7,245.3"/><path d="M695.662,239.944 L702.2,242.7 L714.8,241 L728.9,242.7"/><path d="M637.247,167.669 L625.7,156.5 L615.1,154 L601.5,153.8"/><path d="M590.44,297.512 L596.3,304.7 L604.4,310.1 L617.3,320.1 L627.6,326.6"/><path d="M568.184,202.629 L575.2,187.9 L574.3,179.5 L571.3,167.5"/><path d="M724.991,488.189 L708.8,482.5 L699.2,476.2 L690.1,465.6"/><path d="M661.191,438.049 L666.3,434.2 L672.4,424.7 L680.1,421.1"/><path d="M745.502,478.315 L735.2,465.4 L729.8,455.5"/><path d="M666.855,532.653 L678.7,531.1 L693.2,533.3 L701,531.9 L715.6,533.6"/><path d="M772.27,493.599 L779.6,497.8 L784.3,503.2 L796.9,515.2 L809.3,521.5"/><path d="M786.823,511.624 L801.5,520.3 L808.6,523.9"/><path d="M766.144,534.092 L764.6,521.5 L759.2,505.4 L748.2,493.6 L745.6,478.2"/><path d="M714.81,433.92 L706.8,439 L698.2,450.5 L696.2,458 L694.8,467.9"/><path d="M665.434,471.866 L664.5,453.9 L660.8,442.2"/><path d="M708.713,519.294 L700.6,521.7 L691.2,523.4"/><path d="M765.874,453.958 L754.1,459.3 L746.1,469.5"/><path d="M660.184,453.131 L665,457.7 L675.2,462.6 L690.1,463.7"/><path d="M770.282,465.49 L778.8,473.2 L785.8,475.5 L796.2,473.1 L802.6,472.2"/><path d="M717.821,512.884 L711.1,514.7 L697.7,520.8 L689.2,531.9"/><path d="M660.693,506.727 L661.1,499 L654.7,483.7 L650.5,472.5"/><path d="M676.462,485.67 L681.3,490 L696.7,498.1 L702.9,509.1 L706.8,525.6"/><path d="M734.871,458.518 L749.3,468.1 L761.5,477.6"/><path d="M756.454,457.282 L765.5,444 L773,435.8"/><path d="M675.346,497.808 L687.1,503.3 L696.4,512.6 L710.5,516.2 L718.8,519.5"/><path d="M797.613,434.905 L790.5,431 L785.7,425.9 L773.9,420.3 L768.2,412.3"/><path d="M770.124,433.836 L776.7,420.6 L778.7,413"/><path d="M679.652,453.586 L689.1,464.6 L690.6,470.4 L692.1,476.7"/><path d="M706.2,438.216 L700.4,432.2 L693.7,417.5"/><path d="M672.934,515.376 L663.9,528.2 L655.2,540.7"/><path d="M696.303,512.548 L686.3,523.7 L674.7,534.1"/><path d="M720.945,528.196 L727.6,521.3 L739.6,518.1 L746.6,520.2 L762.1,520.2"/><path d="M777.372,457.618 L775.8,470.3 L768,480.6 L766.2,497.1"/><path d="M752.906,476.983 L740.6,466.9 L736,461.6 L723.5,451.5"/><path d="M743.281,529.519 L747,520.7 L760,509.1"/><path d="M726.554,478.886 L726.9,488.9 L723.1,498.4"/><path d="M746.699,464.764 L751,471.8 L756.3,481.3 L762.9,487.2"/><path d="M747.801,474.702 L757,473.8 L766.4,469.4 L782.3,464.5"/><path d="M785.146,476.928 L769.8,475 L757.2,464.6 L746.6,463.6 L731.5,469.6"/><path d="M694.422,497.266 L685.5,492.3 L678.1,482.1 L669.6,473.4 L664.4,457"/><path d="M753.283,439.032 L745.4,434.3 L738.5,427.5 L734.9,413.8"/></g>
<g fill="#cde2b3"><path d="M496,67.4 L523,67.4 L523,81 L541,92.8 L541,113.6 L529,113.6 L526,98.7 L508,98.7 L496,86.8Z"/><path d="M571,104.7 L600.6,91.3 L597.7,104.7 L576.8,119.6Z"/><path d="M453,96 L466.6,96 L466.6,104.7 L453,104.7Z"/><path d="M437,134.5 L454.7,128.5 L469.6,143.4 L460.6,149.4 L439.8,146.4Z"/><path d="M493.4,162.8 L508.3,162.8 L515.7,173 L515.7,185 L505,179 L493.4,173Z"/><path d="M454.7,164 L474,158.3 L474,176 L460.6,173Z"/><path d="M683.4,69 L698,69 L698,78 L683.4,78Z"/><path d="M795.7,149 L821,147 L821,159.3 L797,159.3Z"/><path d="M600,156.8 L615,156.8 L615,161 L600,161Z"/><path d="M625,212 L641.7,209 L641.7,221 L625,221Z"/><path d="M954.5,282 L983,279.4 L980,293.6 L960,302Z"/><path d="M873.7,306 L888,307.8 L886.5,319 L875,319Z"/><path d="M969.6,127.7 L975,126.5 L986,126 L986,143.6 L980,142 L971.7,135.1Z"/><path d="M744.7,302.7 L767.4,302.7 L767.4,316.9 L744.7,316.9Z"/><path d="M412,338.3 L431.3,336.2 L442,327.7 L459,321.3 L467.4,323.4 L467.4,334 L456.8,342.6 L444,342.6 L433.4,345.7 L420.6,349 L412,353.2Z"/><path d="M493,325.5 L512,323.4 L518.5,327.7 L510,336.2 L495,332Z"/><path d="M496,340.4 L503.6,340.4 L503.6,345.7 L496,345.7Z"/><path d="M488.7,350 L502.6,347.9 L503.6,354.3 L489.8,356.4Z"/><path d="M460,343.6 L464,343.6 L464,349 L460,349Z"/><path d="M426,376.6 L432.3,376.6 L432.3,387.2 L426,387.2Z"/><path d="M412,361.7 L416.4,361.7 L416.4,372.3 L412,372.3Z"/><path d="M483.4,404.3 L492,404.3 L492,412.8 L483.4,412.8Z"/><path d="M412,420 L434,420 L434,446.5 L424,447.7 L412,445.4Z"/><path d="M412,458 L421.5,457 L422.7,467.3 L412,469.6Z"/><path d="M450.3,467.3 L460.7,467.3 L459.6,476.5 L449.2,475.3Z"/><path d="M497.6,440.7 L511.4,442 L525.3,446.5 L530,456.9 L516,463.8 L502.2,461.5 L498.8,450Z"/><path d="M502.2,420 L516,420 L518.4,432.7 L534.5,436.1 L532.2,440.7 L516,440.7 L506.8,429.2Z"/><path d="M529.9,480 L548.3,473 L553,482.2 L570,484.5 L580,490 L578,505.3 L557.5,500.7 L539,493.8 L527.6,489.2Z"/><path d="M416.9,519 L437.7,516.8 L442.3,508.8 L450.3,508.8 L446.9,523.7 L440,530.7 L416.9,533Z"/><path d="M624.5,471.4 L633.8,471.4 L633.8,485.3 L624.5,485.3Z"/><path d="M560,483 L578.4,480 L578.4,500 L560,500Z"/><path d="M643,485.3 L656.8,485.3 L656.8,500 L643,500Z"/><path d="M654.5,473.7 L661.4,473.7 L661.4,483 L654.5,483Z"/><path d="M914,524 L926.5,524 L927.7,549 L914,549Z"/><path d="M546,359.6 L550.4,359.6 L550.4,366 L546,366Z"/><path d="M847.6,351 L853,351 L853,358 L847.6,358Z"/><path d="M711.3,249.8 L724,249.8 L723,268.9 L715.5,264.7 L710.2,258.3Z"/><path d="M412,95 L418,95 L418,110 L412,110Z"/><path d="M555,75 L562,73 L563,81 L556,81Z"/><path d="M677.6,108 L687.2,107.5 L686,112 L678,112.5Z"/><path d="M636,90 L643,88 L643,97 L636,97Z"/></g>
<path d="M723,470 L748,468 L752,480 L745,496 L722,494 L716,480Z" fill="#f0e0c2"/>
<path d="M752,316 L767,316 L765,340 L752,340Z" fill="#f0e0c2"/>
<g fill="#95b2cf" stroke="#95b2cf" stroke-width="1" stroke-linejoin="round"><path d="M405,238 L412,236.6 L418.5,230.2 L429,226 L442,223.8 L456.8,228 L469.6,234.5 L480.2,240.9 L491,246.2 L499.4,248.3 L514.3,249.4 L525,254.7 L535.5,262 L544,269.6 L550.4,280.2 L552.6,290.9 L555.5,298 L556.3,309 L562,322 L568.3,326 L578,325 L593.8,322 L609.8,319.5 L619,321 L630,326.4 L638.5,330.1 L644.9,331.7 L646,333.8 L648.1,339.1 L653.4,345.5 L661.9,353 L668.3,358.3 L677.9,364.7 L688.9,374 L697.7,380.8 L706.6,386.6 L715.5,390.6 L725,396.2 L733.5,399.7 L742,404 L750.5,408.2 L753.4,410.4 L759,404 L763.3,396.9 L770.4,388.4 L781.7,380.6 L793,374.9 L805,370.6 L817.7,370.2 L832.6,373.4 L837.5,376.8 L844.9,382.4 L851.1,389.8 L856.1,397.3 L858.6,404.8 L856.7,411 L858.6,418.4 L861,425.9 L865.3,428.3 L868.9,431.9 L869.8,437.2 L873.3,440.7 L883,443.4 L895.5,444.3 L916.8,445.6 L923.9,446 L924.7,443.4 L931,442.5 L950,442.5 L964.7,440 L990,438.6 L990,470 L963.7,466 L950,466 L940,463.3 L922,462 L904.3,461.1 L886.6,460.2 L868.9,455.8 L860,450.5 L856,445.7 L847.4,439.4 L839,428.7 L832.6,416 L826.2,405.3 L817.7,397.9 L811.3,395.7 L805,404 L796,415.3 L790,421 L781.7,428 L771.8,433.8 L760.5,437.3 L742,437.3 L731.8,432.1 L721.9,425.9 L714.4,418.5 L707,413.5 L697,408.5 L689.6,402.3 L679.7,394.9 L669.8,387.4 L662.3,380 L659.8,374.3 L651.3,368.9 L642.8,363.6 L636.4,359.4 L630,351.9 L625.7,349 L613,343.5 L605,345 L590.6,351.4 L571.5,353 L558.7,349 L557,344 L550.7,336.3 L539.6,325 L535.5,316.4 L533.4,303.6 L531.3,290.9 L527,280.2 L518.5,271.7 L508,266.4 L495,263.2 L482.3,259 L467.4,252.6 L452.6,245.1 L442,243 L431.3,245.1 L420.6,250.4 L412,253.6 L405,255Z"/><path d="M864.4,393.6 L869.6,393.1 L884.6,430 L902.5,424.8 L906.5,424.8 L909.4,430 L884.6,440.9 L880.5,439.2 L874.8,424.8Z"/><path d="M887.5,417.9 L890.3,417.3 L893,429 L890,429.5Z"/><path d="M892.1,415 L895.5,413.8 L899,428 L895.5,428.5Z"/><path d="M897.8,412.7 L900.7,411.5 L906.5,426 L903.6,426.5Z"/><path d="M746.3,376.3 L762.6,376.3 L757.6,383.4 L750.5,392.6 L745.6,388.4Z"/><path d="M706,331.7 L715.5,331.7 L715.5,337 L706,337Z"/><path d="M433.4,281.3 L441,279 L445,288.7 L438,289 L434.5,293 L431,289Z"/><path d="M486.6,211 L493,210 L499.4,214.3 L494,216 L487,216Z"/><path d="M460,263 L464,263 L464,267.4 L460,267.4Z"/><path d="M716,155 L721,155 L722,167 L717,167Z"/><path d="M726,163 L732,163 L734,175 L728,175Z"/><path d="M619,186.6 L623,185.5 L632.7,192 L631,195 L621,191Z"/><path d="M417,435 L433,439.6 L432,444.2 L419.2,439.6Z"/><path d="M624.5,490 L633.8,490 L631,498 L627,498Z"/><path d="M540,163 L544,155 L547,154 L544,164Z"/><path d="M578,107 L590,102 L597,103 L588,108Z"/><path d="M700,215 L704,215 L704,220 L700,220Z"/><path d="M720,213 L728,213 L728,223 L720,223Z"/><path d="M737,216 L745,216 L745,222 L737,222Z"/><path d="M667.7,226 L672,224.3 L677.2,233 L673,235Z"/><path d="M735.7,284 L740,282.8 L742,290 L737,292.3Z"/><path d="M736.8,305 L742,305 L742,317.9 L736.8,317.9Z"/><path d="M745.3,320 L748,320 L753.8,335 L751,337Z"/><path d="M739,222 L749.6,220 L747,225.3 L740,225.3Z"/><path d="M787,322 L792,317.5 L797,318 L796,326 L791,331 L786,329Z"/></g>
<path d="M866,433.2 L880,434.2 M905,430 L913.5,432.5" stroke="#95b2cf" stroke-width="0.9" fill="none"/>
<g fill="none" stroke="#c9c6c0" stroke-width="1.8"><path d="M411,71 L440,66.4"/><path d="M411,158 L470,150 L520,143.4 L570,128 L620,113.6 L665.5,94 L722,95.7 L810,73.4 L866.6,68.5 L974,67"/><path d="M411,191 L478,203.4 L548,222.9 L575.5,234.6 L634,269.7 L667.7,320 L714.5,362.5 L742,388 L767.7,405 L800,424.3"/><path d="M635.7,69 L668.5,92.8 L725,98.7 L740,134.5 L755,164 L770,209 L772.8,228 L773,260 L771.4,280 L768,315.5 L762.6,340 L758,365 L752,400"/><path d="M720,366.8 L773,365 L819,363.3 L860,360.7 L900,350 L940,330"/><path d="M411,402.6 L490,403 L571,402.6 L610,404"/><path d="M412.3,498.4 L470,480 L520,462 L570,445.4 L618,447 L700,448 L780,455 L830,462"/><path d="M538,340 L565,387.7 L600.6,444"/><path d="M600,120 L620,113.6"/><path d="M853.8,371.3 L890,399 L909,420"/><path d="M900,420 L940,405 L986,380"/><path d="M820,450 L870,470 L920,480 L986,475"/></g>
<g fill="none" stroke="#f5f2ec" stroke-width="0.7" stroke-dasharray="2 2"><path d="M411,71 L440,66.4"/><path d="M411,158 L470,150 L520,143.4 L570,128 L620,113.6 L665.5,94 L722,95.7 L810,73.4 L866.6,68.5 L974,67"/><path d="M411,191 L478,203.4 L548,222.9 L575.5,234.6 L634,269.7 L667.7,320 L714.5,362.5 L742,388 L767.7,405 L800,424.3"/><path d="M635.7,69 L668.5,92.8 L725,98.7 L740,134.5 L755,164 L770,209 L772.8,228 L773,260 L771.4,280 L768,315.5 L762.6,340 L758,365 L752,400"/><path d="M720,366.8 L773,365 L819,363.3 L860,360.7 L900,350 L940,330"/><path d="M411,402.6 L490,403 L571,402.6 L610,404"/><path d="M412.3,498.4 L470,480 L520,462 L570,445.4 L618,447 L700,448 L780,455 L830,462"/><path d="M538,340 L565,387.7 L600.6,444"/><path d="M600,120 L620,113.6"/><path d="M853.8,371.3 L890,399 L909,420"/><path d="M900,420 L940,405 L986,380"/><path d="M820,450 L870,470 L920,480 L986,475"/></g>
<g fill="none" stroke="#e0d68c" stroke-width="2.5" stroke-linejoin="round" stroke-linecap="round"><path d="M411,183.8 L440,183.8 L472,184.9 L472,194.5 L482.6,204 L499.6,211.5 L525,220 L538,227.4 L550.6,240.2 L561.3,248.7 L578.3,252 L590,258.3 L602.8,271 L622,281.7 L647.4,288 L662.3,294.5 L675,309.4 L687.9,316.8 L704.9,311.5 L717.7,300.9 L726.2,293.4 L739,294.5 L760.2,300.9 L790,302 L818.4,288 L852.4,271 L869.4,269.5 L903.5,278 L937.5,273.8 L986,252.5"/><path d="M496.5,192 L500.7,175 L517.8,160"/><path d="M567.7,212.6 L567.7,223.2 L576,231.7 L593,236 L602.8,247.7 L609,258.3 L622,281.7"/><path d="M643.2,275.3 L685.7,272 L707,275.3 L722,286 L726,290"/><path d="M728.3,283.8 L743.2,276.4 L777.2,278.5"/><path d="M780,91.3 L778.7,140.4 L787.7,164 L789,194 L779.4,220 L776,241.3 L777.2,279.6 L781.5,290.2 L790,302"/><path d="M686.4,109 L686.4,140.4 L695,147.9 L710,146.4 L713,153.8 L740,149.4"/><path d="M444,98.5 L436.5,116"/><path d="M926,200 L931.8,242.5 L914.8,251 L897.8,259.6 L903.5,285 L909,293.6"/><path d="M875,322 L917.6,353 L930,370"/><path d="M724,317.9 L723.4,362.3 L713.5,385 L696.5,404.8 L685,421.8 L674.4,440 L662,452"/><path d="M456.8,316 L490.9,315 L501.5,317 L516.4,320.2 L526,325.5"/><path d="M501.5,300 L499.4,316"/><path d="M488.7,327.7 L484.5,338.3"/><path d="M412.3,447.7 L433,453.4 L456,454.6 L488.4,454.6 L500,459.2 L513.7,467.3 L530,477.6 L543.7,489.2 L557.5,498.4 L570,505.3 L600,514 L629.8,524 L664.5,526.7 L699,521.7 L736.5,511.8 L773.7,510.6 L827,513 L839.6,516.8 L864.4,531.7 L889,549"/><path d="M433,453.4 L451.5,465 L479,475.3"/><path d="M548.3,438.4 L565,434 L580.7,428.8"/><path d="M569,453 L583,480.7 L590,500 L593.5,520 L593,549"/><path d="M749,444.8 L753.8,469.6 L749,494.4 L751,511.8 L768.7,531.7 L771,549"/><path d="M716.6,467 L714,482 L716,500"/><path d="M696,473.7 L720,485.3"/><path d="M835.9,454.7 L858,463 L864.4,474.6 L909,474.6"/><path d="M884,484.5 L914,499.4 L943.8,508 L983.5,506.8"/><path d="M812,544 L844.6,529"/><path d="M733.6,320 L735.7,332.8 L742,338 L761.3,340"/></g>
<g fill="none" stroke="#efe8a6" stroke-width="1.5" stroke-linejoin="round" stroke-linecap="round"><path d="M411,183.8 L440,183.8 L472,184.9 L472,194.5 L482.6,204 L499.6,211.5 L525,220 L538,227.4 L550.6,240.2 L561.3,248.7 L578.3,252 L590,258.3 L602.8,271 L622,281.7 L647.4,288 L662.3,294.5 L675,309.4 L687.9,316.8 L704.9,311.5 L717.7,300.9 L726.2,293.4 L739,294.5 L760.2,300.9 L790,302 L818.4,288 L852.4,271 L869.4,269.5 L903.5,278 L937.5,273.8 L986,252.5"/><path d="M496.5,192 L500.7,175 L517.8,160"/><path d="M567.7,212.6 L567.7,223.2 L576,231.7 L593,236 L602.8,247.7 L609,258.3 L622,281.7"/><path d="M643.2,275.3 L685.7,272 L707,275.3 L722,286 L726,290"/><path d="M728.3,283.8 L743.2,276.4 L777.2,278.5"/><path d="M780,91.3 L778.7,140.4 L787.7,164 L789,194 L779.4,220 L776,241.3 L777.2,279.6 L781.5,290.2 L790,302"/><path d="M686.4,109 L686.4,140.4 L695,147.9 L710,146.4 L713,153.8 L740,149.4"/><path d="M444,98.5 L436.5,116"/><path d="M926,200 L931.8,242.5 L914.8,251 L897.8,259.6 L903.5,285 L909,293.6"/><path d="M875,322 L917.6,353 L930,370"/><path d="M724,317.9 L723.4,362.3 L713.5,385 L696.5,404.8 L685,421.8 L674.4,440 L662,452"/><path d="M456.8,316 L490.9,315 L501.5,317 L516.4,320.2 L526,325.5"/><path d="M501.5,300 L499.4,316"/><path d="M488.7,327.7 L484.5,338.3"/><path d="M412.3,447.7 L433,453.4 L456,454.6 L488.4,454.6 L500,459.2 L513.7,467.3 L530,477.6 L543.7,489.2 L557.5,498.4 L570,505.3 L600,514 L629.8,524 L664.5,526.7 L699,521.7 L736.5,511.8 L773.7,510.6 L827,513 L839.6,516.8 L864.4,531.7 L889,549"/><path d="M433,453.4 L451.5,465 L479,475.3"/><path d="M548.3,438.4 L565,434 L580.7,428.8"/><path d="M569,453 L583,480.7 L590,500 L593.5,520 L593,549"/><path d="M749,444.8 L753.8,469.6 L749,494.4 L751,511.8 L768.7,531.7 L771,549"/><path d="M716.6,467 L714,482 L716,500"/><path d="M696,473.7 L720,485.3"/><path d="M835.9,454.7 L858,463 L864.4,474.6 L909,474.6"/><path d="M884,484.5 L914,499.4 L943.8,508 L983.5,506.8"/><path d="M812,544 L844.6,529"/><path d="M733.6,320 L735.7,332.8 L742,338 L761.3,340"/></g>
<g fill="none" stroke="#66dde9" stroke-width="3.1" stroke-linejoin="round"><path d="M766.8,67.4 L771,83.8 L769.8,104.7 L760.9,128.5 L753.4,158.3 L746,188 L737,215 L734.7,220 L726.2,237 L724,262.6 L726.2,290.2 L724,317.9"/><path d="M661.4,450.7 L662.6,462.2 L666,473.7 L668.4,485.3 L669.5,502 L668,524 L652,549"/></g>
<g fill="none" stroke="#b5f5fa" stroke-width="1.1" stroke-linejoin="round"><path d="M766.8,67.4 L771,83.8 L769.8,104.7 L760.9,128.5 L753.4,158.3 L746,188 L737,215 L734.7,220 L726.2,237 L724,262.6 L726.2,290.2 L724,317.9"/><path d="M661.4,450.7 L662.6,462.2 L666,473.7 L668.4,485.3 L669.5,502 L668,524 L652,549"/></g>
<rect x="456" y="185.5" width="14" height="6.5" rx="1.5" fill="#fbfbf0" stroke="#d8c56a" stroke-width="0.8"/><text x="463.0" y="190.7" font-size="6.4" text-anchor="middle" fill="#222">A13</text>
<rect x="853" y="266.7" width="17" height="6.5" rx="1.5" fill="#fbfbf0" stroke="#d8c56a" stroke-width="0.8"/><text x="861.5" y="271.9" font-size="6.4" text-anchor="middle" fill="#222">A13</text>
<rect x="730.5" y="206" width="17" height="7.4" rx="1.5" fill="#fbfbf0" stroke="#d8c56a" stroke-width="0.8"/><text x="739.0" y="212.1" font-size="6.4" text-anchor="middle" fill="#222">M25</text>
<rect x="698.5" y="393.4" width="17.7" height="7.5" rx="1.5" fill="#fbfbf0" stroke="#d8c56a" stroke-width="0.8"/><text x="707.35" y="399.59999999999997" font-size="6.4" text-anchor="middle" fill="#222">A282</text>
<rect x="819.8" y="509.3" width="14.4" height="7" rx="1.5" fill="#fbfbf0" stroke="#d8c56a" stroke-width="0.8"/><text x="827.0" y="515.0" font-size="6.4" text-anchor="middle" fill="#222">A2</text>
<g font-family="Liberation Sans" fill="#222" stroke="#ffffff" stroke-width="1.6" stroke-opacity="0.7" paint-order="stroke" stroke-linejoin="round">
<text x="619.4" y="82.3" font-size="7.75" fill="#000">Havering</text>
<text x="710.8" y="74.9" font-size="7.2">Cranham</text>
<text x="520.2" y="94.3" font-size="7.2">Rush Green</text>
<text x="669.4" y="106.8" font-size="7.2">Upminster</text>
<text x="430.5" y="124" font-size="7.2">Becontree</text>
<text x="573" y="132.1" font-size="7.2">Elm Park</text>
<text x="906.3" y="128.1" font-size="7.2">Bulphan</text>
<text x="743.9" y="149.4" font-size="7.2">North Ockendon</text>
<text x="414" y="152" font-size="7.75" fill="#000">Barking and Dagenham</text>
<text x="539.6" y="194.6" font-size="7.2">South Hornchurch</text>
<text x="965" y="209.8" font-size="7.2">Hornd</text>
<text x="554.7" y="229.8" font-size="7.2">Rainham</text>
<text x="917" y="251" font-size="7.2">Orsett</text>
<text x="738" y="251" font-size="7.2">South Ockendon</text>
<text x="608.7" y="268.9" font-size="7.2">Wennington</text>
<text x="924" y="270" font-size="7.75" fill="#000">Thurrock</text>
<text x="673" y="288.4" font-size="7.2">Aveley</text>
<text x="781" y="296.5" font-size="7.2">North Stifford</text>
<text x="786" y="315.2" font-size="7.2">Chafford Hundred</text>
<text x="410" y="318.6" font-size="7.2">Thamesmead</text>
<text x="422.8" y="326.8" font-size="7.2">South</text>
<text x="471.6" y="326.8" font-size="7.2">Belvedere</text>
<text x="825" y="335.6" font-size="7.2">Grays</text>
<text x="537" y="345.5" font-size="7.2">Erith</text>
<text x="906.9" y="343.5" font-size="7.2">Chadwell Saint</text>
<text x="923.3" y="352.6" font-size="7.2">Mary</text>
<text x="728.7" y="347.9" font-size="7.2">West Thurrock</text>
<text x="653.8" y="353.3" font-size="7.2">Purfleet</text>
<text x="592.3" y="357.5" font-size="7.2">Crayford Ness</text>
<text x="775" y="363.4" font-size="7.2">South Stifford</text>
<text x="832.6" y="369.6" font-size="7.2">Grays</text>
<text x="953.7" y="366.3" font-size="7.2">West Tilbury</text>
<text x="492.6" y="369.3" font-size="7.2">Crayford</text>
<text x="550.8" y="396" font-size="7.2">Slade Green</text>
<text x="487.5" y="404" font-size="7.2">Barnehurst</text>
<text x="902" y="413.8" font-size="7.2">Tilbury</text>
<text x="460.6" y="416.6" font-size="7.75" fill="#000">Bexley</text>
<text x="530.4" y="446.8" font-size="7.2">Crayford</text>
<text x="696" y="447.3" font-size="7.2">Stone</text>
<text x="730.8" y="454" font-size="7.2">Stone</text>
<text x="771.7" y="456" font-size="7.2">Swanscombe</text>
<text x="768.2" y="465.2" font-size="7.2">and Greenhithe</text>
<text x="827.5" y="463.4" font-size="7.2">Northfleet</text>
<text x="591" y="462.5" font-size="7.2">Dartford</text>
<text x="422.6" y="476.2" font-size="7.2">Bexley</text>
<text x="673.2" y="472.1" font-size="7.2">Stone</text>
<text x="912.4" y="479.6" font-size="7.2">Gravesend</text>
<text x="714.6" y="486.5" font-size="7.2">Bluewater</text>
<text x="498.8" y="493.9" font-size="7.2">Coldblow</text>
<text x="589.6" y="488.6" font-size="7.2">Dartford</text>
<text x="682.6" y="511.8" font-size="7.75" fill="#000">Dartford</text>
<text x="551.8" y="516.4" font-size="7.2">Wilmington</text>
<text x="913.6" y="519.3" font-size="7.2">Gravesend</text>
<text x="448.7" y="519.6" font-size="7.2">North Cray</text>
<text x="662.8" y="526.2" font-size="7.2">Lane End</text>
<text x="554" y="537.1" font-size="7.2">Wilmington</text>
<text x="748" y="535.4" font-size="7.2">Bean</text>
<text x="628.5" y="542.6" font-size="7.2">Hawley</text>
<text x="694.3" y="545.3" font-size="7.2">Darenth</text>
<text x="792" y="548.5" font-size="7.2">Betsham</text>
</g>
<rect x="672.5" y="443.5" width="4.5" height="6" fill="#cfe6f0" stroke="#6a9ab0" stroke-width="0.6"/>
<path d="M670,445 L679,436" stroke="#9a9a8a" stroke-width="0.6"/>
<path d="M659,449.5 L667,442.3 L673.5,448.2 L667.5,455.5 L659,455.5Z" fill="#55c851" stroke="#2d8f2b" stroke-width="0.7"/>
<path d="M661,450 L666.5,445 L670,448.5" fill="none" stroke="#9fe39c" stroke-width="0.8"/>
<rect x="678.2" y="430" width="50.8" height="10" fill="#fff" stroke="#888" stroke-width="0.6"/>
<text x="681.5" y="438.3" font-size="8.2" fill="#444" font-family="Liberation Sans" textLength="46.5" lengthAdjust="spacingAndGlyphs">SIM 004 AT5</text>
</g>
<g>
<path d="M423.5,78.4 h12 a1,1 0 0 1 0,0 v6.9 h6.2 v12.2 h-6.2 v7.9 h-12 v-7.9 h-6.2 v-12.2 h6.2z" fill="#fff" stroke="#777" stroke-width="0.8" stroke-linejoin="round"/>
<path d="M427.3,83.3 l2.2,-2.2 l2.2,2.2z M427.3,100.5 l2.2,2.2 l2.2,-2.2z M421.4,91.4 l2.2,-2.2 v4.4z M437.6,89.2 l2.2,2.2 l-2.2,2.2z" fill="#8294b8"/>
<rect x="427.2" y="126" width="5.6" height="130" fill="#fff" stroke="#888" stroke-width="0.7"/>
<path d="M430,128 V254" stroke="#999" stroke-width="0.6" stroke-dasharray="0.6 5.4"/>
<rect x="423.5" y="114.4" width="12.5" height="11.8" rx="2.5" fill="#fff" stroke="#777" stroke-width="0.8"/>
<path d="M429.75,116.8 v7 M426.25,120.3 h7" stroke="#5a77a8" stroke-width="1.4"/>
<rect x="425.4" y="174.5" width="8.6" height="4.6" rx="1" fill="#fff" stroke="#777" stroke-width="0.7"/>
<path d="M427,176.8 h5.4" stroke="#5a77a8" stroke-width="1.2"/>
<path d="M424,255.7 h12 v8 a4.5,4.5 0 0 1 -4.5,4.8 h-3 a4.5,4.5 0 0 1 -4.5,-4.8z" fill="#fff" stroke="#777" stroke-width="0.8"/>
<path d="M426.8,262 h6.4" stroke="#5a77a8" stroke-width="1.3"/>
</g>
<rect x="894.9" y="73.8" width="14.4" height="14.4" rx="2.8" fill="#f6f9fc" stroke="#7a7a7a" stroke-width="0.9"/><rect x="911.6999999999999" y="73.8" width="14.4" height="14.4" rx="2.8" fill="#f6f9fc" stroke="#7a7a7a" stroke-width="0.9"/><rect x="929.0" y="73.8" width="14.4" height="14.4" rx="2.8" fill="#f6f9fc" stroke="#7a7a7a" stroke-width="0.9"/><rect x="946.9" y="73.8" width="14.4" height="14.4" rx="2.8" fill="#f6f9fc" stroke="#7a7a7a" stroke-width="0.9"/><rect x="963.8" y="73.8" width="14.4" height="14.4" rx="2.8" fill="#f6f9fc" stroke="#7a7a7a" stroke-width="0.9"/><path d="M898.1,84.8 L900.7,77.3 L904.8,77.8 L904.3,78.9 L902.8,79.1 L904.3,79.5 L903.8,80.7 L902.3,80.9 L903.8,81.3 L903.3,82.5 L901.8,82.7 L903.3,83.1 L902.8,84.6Z" fill="#5b7ec6"/><path d="M919,78 v5.8 M916.1,80.9 h5.8" stroke="#4d6ea8" stroke-width="1.8"/><path d="M933.6,78.3 h6.2 l-0.9,1.4 h-6.2z M933.1,80.6 h6.2 l-0.9,1.4 h-6.2z M932.6,82.9 h6.2 l-0.9,1.5 h-6.2z" fill="#6b7fa2"/><text x="954" y="84.2" font-size="11.5" font-weight="bold" font-family="Liberation Serif" text-anchor="middle" fill="#3e5e8e">g</text><circle cx="969.7" cy="79.3" r="2.7" fill="none" stroke="#5a6e8e" stroke-width="1.3"/><path d="M971.7,81.3 l3.6,3.6" stroke="#5a6e8e" stroke-width="1.5"/>
<rect x="413.8" y="533.3" width="94.8" height="14.2" rx="4" fill="#fff" fill-opacity="0.9"/><text x="417.3" y="543.5" font-size="8.6" fill="#333" font-family="Liberation Sans">(12) 51.56747, 0.31963</text>
</svg>
</body></html>
